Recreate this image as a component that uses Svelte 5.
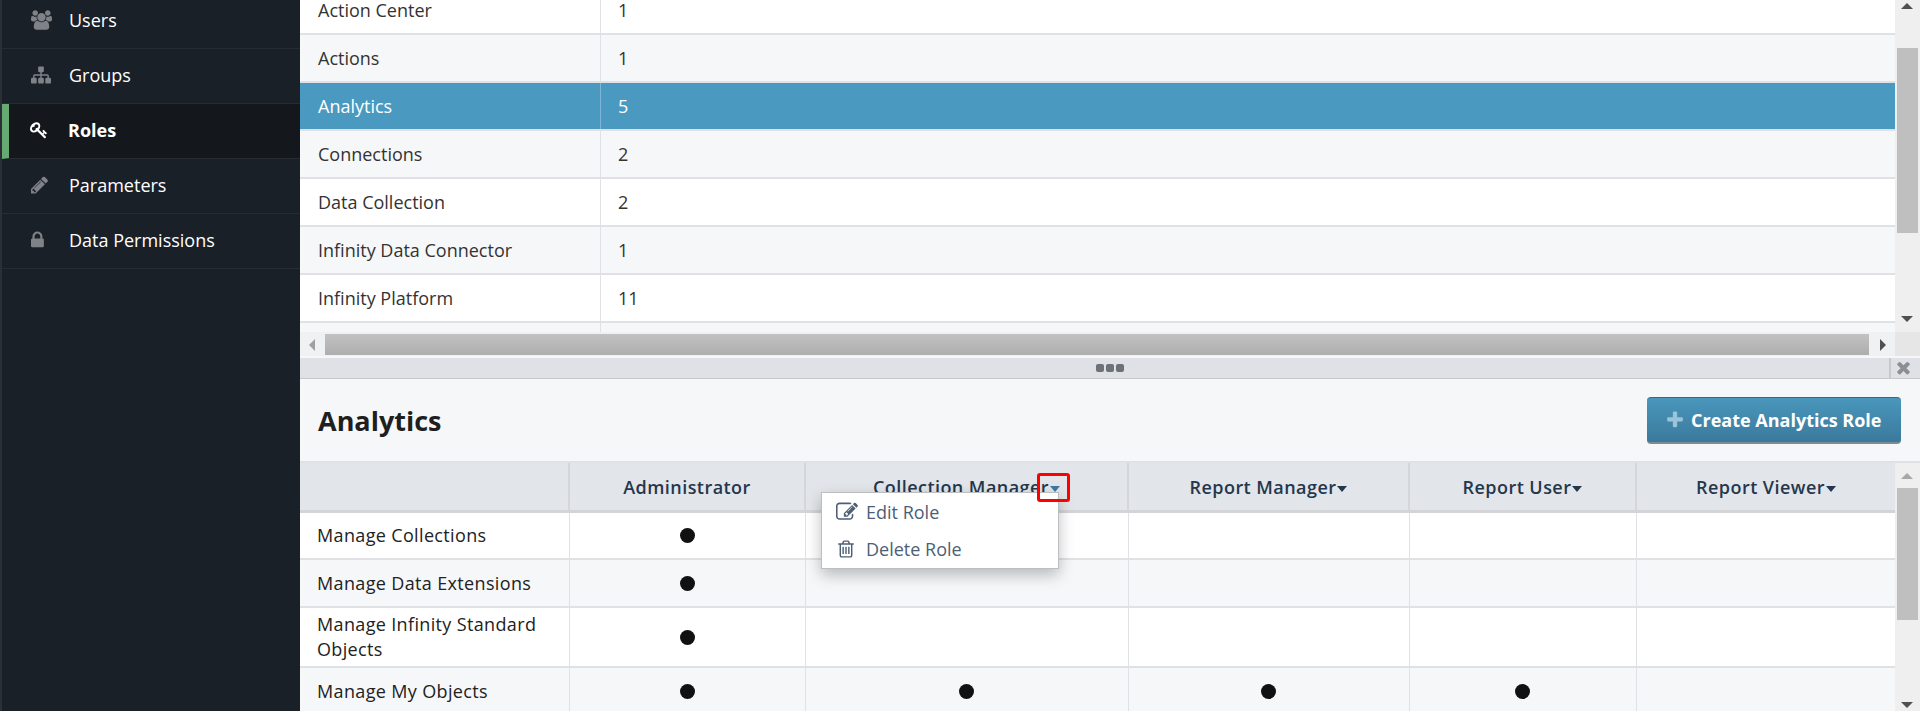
<script lang="ts">
    const icons: Record<string, string> = {
        users: "M593 896q-162 5-265 128h-134q-82 0-138-40.5t-56-118.5q0-353 124-353 6 0 43.5 21t97.5 42.5 119 21.5q67 0 133-23-5 37-5 66 0 139 81 256zm1071 637q0 120-73 189.5t-194 69.5h-874q-121 0-194-69.5t-73-189.5q0-53 3.5-103.5t14-109 26.5-108.5 43-97.5 62-81 85.5-53.5 111.5-20q10 0 43 21.5t73 48 107 48 135 21.5 135-21.5 107-48 73-48 43-21.5q61 0 111.5 20t85.5 53.5 62 81 43 97.5 26.5 108.5 14 109 3.5 103.5zm-1024-1277q0 106-75 181t-181 75-181-75-75-181 75-181 181-75 181 75 75 181zm704 384q0 159-112.5 271.5t-271.5 112.5-271.5-112.5-112.5-271.5 112.5-271.5 271.5-112.5 271.5 112.5 112.5 271.5zm576 225q0 78-56 118.5t-138 40.5h-134q-103-123-265-128 81-117 81-256 0-29-5-66 66 23 133 23 59 0 119-21.5t97.5-42.5 43.5-21q124 0 124 353zm-128-609q0 106-75 181t-181 75-181-75-75-181 75-181 181-75 181 75 75 181z",
        sitemap: "M1792 1248v320q0 40-28 68t-68 28h-320q-40 0-68-28t-28-68v-320q0-40 28-68t68-28h96v-192h-512v192h96q40 0 68 28t28 68v320q0 40-28 68t-68 28h-320q-40 0-68-28t-28-68v-320q0-40 28-68t68-28h96v-192h-512v192h96q40 0 68 28t28 68v320q0 40-28 68t-68 28h-320q-40 0-68-28t-28-68v-320q0-40 28-68t68-28h96v-192q0-52 38-90t90-38h512v-192h-96q-40 0-68-28t-28-68v-320q0-40 28-68t68-28h320q40 0 68 28t28 68v320q0 40-28 68t-68 28h-96v192h512q52 0 90 38t38 90v192h96q40 0 68 28t28 68z",
        key: "M832 512q0-80-56-136t-136-56-136 56-56 136q0 42 19 83-41-19-83-19-80 0-136 56t-56 136 56 136 136 56 136-56 56-136q0-42-19-83 41 19 83 19 80 0 136-56t56-136zm851 704q0 17-49 66t-66 49q-9 0-28.5-16t-36.5-33-38.5-40-24.5-26l-96 96 220 220q28 28 28 68 0 42-39 81t-81 39q-40 0-68-28l-671-671q-176 131-365 131-163 0-265.5-102.5t-102.5-265.5q0-160 95-313t248-248 313-95q163 0 265.5 102.5t102.5 265.5q0 189-131 365l355 355 96-96q-3-3-26-24.5t-40-38.5-33-36.5-16-28.5q0-17 49-66t66-49q13 0 23 10 6 6 46 44.5t82 79.5 86.5 86 73 78 28.5 41z",
        pencil: "M491 1536l91-91-235-235-91 91v107h128v128h107zm523-928q0-22-22-22-10 0-17 7l-542 542q-7 7-7 17 0 22 22 22 10 0 17-7l542-542q7-7 7-17zm-54-192l416 416-832 832h-416v-416zm683 96q0 53-37 90l-166 166-416-416 166-165q36-38 90-38 53 0 91 38l235 234q37 39 37 91z",
        lock: "M640 768h512v-192q0-106-75-181t-181-75-181 75-75 181v192zm832 96v576q0 40-28 68t-68 28h-960q-40 0-68-28t-28-68v-576q0-40 28-68t68-28h32v-192q0-184 132-316t316-132 316 132 132 316v192h32q40 0 68 28t28 68z",
        plus: "M1600 736v192q0 40-28 68t-68 28h-416v416q0 40-28 68t-68 28h-192q-40 0-68-28t-28-68v-416h-416q-40 0-68-28t-28-68v-192q0-40 28-68t68-28h416v-416q0-40 28-68t68-28h192q40 0 68 28t28 68v416h416q40 0 68 28t28 68z",
        times: "M1490 1322q0 40-28 68l-136 136q-28 28-68 28t-68-28l-294-294-294 294q-28 28-68 28t-68-28l-136-136q-28-28-28-68t28-68l294-294-294-294q-28-28-28-68t28-68l136-136q28-28 68-28t68 28l294 294 294-294q28-28 68-28t68 28l136 136q28 28 28 68t-28 68l-294 294 294 294q28 28 28 68z",
        edit: "M888 1184l116-116-152-152-116 116v56h96v96h56zm440-720q-16-16-33 1l-350 350q-17 17-1 33t33-1l350-350q17-17 1-33zm80 594v190q0 119-84.5 203.5t-203.5 84.5h-832q-119 0-203.5-84.5t-84.5-203.5v-832q0-119 84.5-203.5t203.5-84.5h832q63 0 117 25 15 7 18 23 3 17-9 29l-49 49q-14 14-32 8-23-6-45-6h-832q-66 0-113 47t-47 113v832q0 66 47 113t113 47h832q66 0 113-47t47-113v-126q0-13 9-22l64-64q15-15 35-7t20 29zm-96-738l288 288-672 672h-288v-288zm444 132l-92 92-288-288 92-92q28-28 68-28t68 28l152 152q28 28 28 68t-28 68z",
        trash: "M704 736v576q0 14-9 23t-23 9h-64q-14 0-23-9t-9-23v-576q0-14 9-23t23-9h64q14 0 23 9t9 23zm256 0v576q0 14-9 23t-23 9h-64q-14 0-23-9t-9-23v-576q0-14 9-23t23-9h64q14 0 23 9t9 23zm256 0v576q0 14-9 23t-23 9h-64q-14 0-23-9t-9-23v-576q0-14 9-23t23-9h64q14 0 23 9t9 23zm128 724v-948h-896v948q0 22 7 40.5t14.5 27 10.5 8.5h832q3 0 10.5-8.5t14.5-27 7-40.5zm-672-1076h448l-48-117q-7-9-17-11h-317q-10 2-17 11zm928 32v64q0 14-9 23t-23 9h-96v948q0 83-47 143.5t-113 60.5h-832q-66 0-113-58.5t-47-141.5v-952h-96q-14 0-23-9t-9-23v-64q0-14 9-23t23-9h309l70-167q15-37 54-63t79-26h320q40 0 79 26t54 63l70 167h309q14 0 23 9t9 23z",
    };

    // glyphs sit left-aligned in the reference, so some boxes start at the glyph's own edge
    const boxes: Record<string, string> = {
        users: "0 0 1920 1792",
        lock: "320 0 1792 1792",
        pencil: "128 0 1792 1792",
    };

    const nav = [
        { label: "Users", icon: "users" },
        { label: "Groups", icon: "sitemap" },
        { label: "Roles", icon: "key", active: true },
        { label: "Parameters", icon: "pencil" },
        { label: "Data Permissions", icon: "lock" },
    ];

    const categories = [
        ["Action Center", 1],
        ["Actions", 1],
        ["Analytics", 5],
        ["Connections", 2],
        ["Data Collection", 2],
        ["Infinity Data Connector", 1],
        ["Infinity Platform", 11],
        ["", ""],
    ];

    const roles = [
        { name: "Administrator" },
        { name: "Collection Manager", menu: true },
        { name: "Report Manager", menu: true },
        { name: "Report User", menu: true },
        { name: "Report Viewer", menu: true },
    ];

    const perms = [
        { name: "Manage Collections", on: [0] },
        { name: "Manage Data Extensions", on: [0] },
        { name: "Manage Infinity Standard Objects", on: [0] },
        { name: "Manage My Objects", on: [0, 1, 2, 3] },
    ];
</script>

{#snippet icon(name: string, cls: string)}
    <svg class={cls} viewBox={boxes[name] ?? "0 0 1792 1792"} aria-hidden="true"><path d={icons[name]} /></svg>
{/snippet}

<div class="app">
    <aside class="sidebar">
        <ul class="nav">
            {#each nav as item}
                <li class:active={item.active}>
                    {@render icon(item.icon, item.icon === "users" ? "nav-icon wide" : "nav-icon")}
                    <span>{item.label}</span>
                </li>
            {/each}
        </ul>
    </aside>

    <main class="main">
        <section class="top">
            <div class="top-body">
                <div class="top-list">
                    <div class="list">
                        {#each categories as [name, count], i}
                            <div class="row" class:alt={i % 2 === 1} class:selected={name === "Analytics"}>
                                <div class="cell-name">{name}</div>
                                <div class="cell-count">{count}</div>
                            </div>
                        {/each}
                    </div>
                </div>
                <div class="vbar">
                    <span class="arrow up"></span>
                    <div class="vthumb"></div>
                    <span class="arrow down"></span>
                </div>
            </div>
            <div class="hbar">
                <span class="arrow left"></span>
                <div class="hthumb"></div>
                <span class="arrow right"></span>
                <div class="corner"></div>
            </div>
        </section>

        <div class="splitter">
            <div class="handle"><i></i><i></i><i></i></div>
            <div class="close">{@render icon("times", "close-icon")}</div>
        </div>

        <section class="detail">
            <header class="detail-head">
                <h1>Analytics</h1>
                <button class="create">{@render icon("plus", "plus-icon")}Create Analytics Role</button>
            </header>

            <div class="matrix-wrap">
                <table class="matrix">
                    <colgroup>
                        <col style="width:269px" />
                        <col style="width:236px" />
                        <col style="width:323px" />
                        <col style="width:281px" />
                        <col style="width:227px" />
                        <col style="width:259px" />
                    </colgroup>
                    <thead>
                        <tr>
                            <th></th>
                            {#each roles as role}
                                <th class:open={role.name === "Collection Manager"}>
                                    {role.name}{#if role.menu}<span class="caret"></span>{/if}
                                </th>
                            {/each}
                        </tr>
                    </thead>
                    <tbody>
                        {#each perms as perm}
                            <tr>
                                <td class="perm">{perm.name}</td>
                                {#each roles as _, c}
                                    <td class="mark">
                                        {#if perm.on.includes(c)}<span class="dot"></span>{/if}
                                    </td>
                                {/each}
                            </tr>
                        {/each}
                    </tbody>
                </table>
                <div class="vbar low">
                    <span class="arrow up"></span>
                    <div class="vthumb"></div>
                    <span class="arrow down"></span>
                </div>

                <div class="menu">
                    <div class="menu-item"><span class="menu-ico">{@render icon("edit", "edit-icon")}</span>Edit Role</div>
                    <div class="menu-item"><span class="menu-ico">{@render icon("trash", "trash-icon")}</span>Delete Role</div>
                </div>
                <div class="callout"></div>
            </div>
        </section>
    </main>
</div>

<style>
    :global(body) {
        margin: 0;
        overflow: hidden;
    }

    .app {
        display: flex;
        width: 1920px;
        height: 711px;
        overflow: hidden;
        font-family: "Open Sans", sans-serif;
        background: #f6f7f9;
    }

    .sidebar {
        flex: 0 0 298px;
        border-left: 2px solid #2b3036;
        background: #1a2028;
        overflow: hidden;
    }

    .nav {
        margin: -6px 0 0;
        padding: 0;
        list-style: none;
    }

    .nav li {
        display: flex;
        align-items: center;
        box-sizing: border-box;
        height: 55px;
        padding: 0 0 3px 29px;
        border-bottom: 1px solid #262c33;
        color: #fff;
        font-size: 18px;
    }

    .nav li.active {
        background: #14181c;
        border-left: 7px solid #66a973;
        padding-left: 21px;
        font-weight: 700;
    }

    .nav-icon {
        flex: none;
        width: 20px;
        height: 20px;
        margin-right: 18px;
        fill: #7f8286;
    }

    .nav-icon.wide {
        width: 21px;
        margin-right: 17px;
    }

    .active .nav-icon {
        width: 18px;
        height: 18px;
        margin-right: 20px;
        fill: #fff;
    }

    .main {
        flex: 1;
        min-width: 0;
        display: flex;
        flex-direction: column;
    }

    .top {
        height: 356px;
        flex: none;
        display: flex;
        flex-direction: column;
        background: #fff;
    }

    .top-body {
        flex: 1;
        min-height: 0;
        display: flex;
    }

    .top-list {
        flex: 1;
        overflow: hidden;
    }

    .list {
        margin-top: -13px;
    }

    .row {
        display: flex;
        height: 48px;
        box-sizing: border-box;
        border-bottom: 2px solid #dfe1e4;
        color: #333;
        font-size: 18px;
        line-height: 46px;
        background: #fff;
    }

    .row.alt {
        background: #f6f7f9;
    }

    .row.selected {
        background: #4a99c0;
        color: #fff;
    }

    .cell-name {
        width: 301px;
        box-sizing: border-box;
        padding-left: 18px;
        border-right: 1px solid #dfe1e4;
    }

    .cell-count {
        padding-left: 17px;
    }

    .selected .cell-name {
        border-right-color: #7fb6d3;
    }

    .vbar {
        flex: 0 0 25px;
        width: 25px;
        background: #efefef;
        position: relative;
    }

    .vthumb {
        position: absolute;
        left: 2px;
        right: 2px;
        top: 48px;
        height: 185px;
        background: #bfbfbf;
    }

    .arrow {
        position: absolute;
        width: 0;
        height: 0;
        border: 6px solid transparent;
    }

    .arrow.up {
        top: 3px;
        left: 6px;
        border-top: 0;
        border-bottom: 6px solid #505050;
    }

    .arrow.down {
        bottom: 10px;
        left: 6px;
        border-bottom: 0;
        border-top: 6px solid #505050;
    }

    .hbar {
        position: relative;
        flex: none;
        height: 24px;
        background: #f0f1f2;
    }

    .hthumb {
        position: absolute;
        left: 25px;
        top: 2px;
        width: 1544px;
        height: 21px;
        background: linear-gradient(#c2c2c2, #aeaeae);
    }

    .arrow.left {
        top: 7px;
        left: 9px;
        border-left: 0;
        border-right: 6px solid #a0a0a0;
    }

    .arrow.right {
        top: 7px;
        left: 1580px;
        border-right: 0;
        border-left: 6px solid #505050;
    }

    .corner {
        position: absolute;
        right: 0;
        top: 0;
        width: 25px;
        height: 24px;
        background: #e6e6e6;
    }

    .splitter {
        flex: none;
        display: flex;
        height: 21px;
        margin-top: 2px;
        box-sizing: border-box;
        background: #dfe1e6;
        border-bottom: 1px solid #c6c8cb;
    }

    .handle {
        flex: 1;
        display: flex;
        justify-content: center;
        align-items: center;
        gap: 2px;
        padding-left: 30px;
    }

    .handle i {
        width: 8px;
        height: 8px;
        background: #6c7278;
        border-radius: 2px;
    }

    .close {
        flex: 0 0 31px;
        box-sizing: border-box;
        display: flex;
        align-items: center;
        justify-content: center;
        padding: 0 4px 2px 0;
        border-left: 2px solid #c6c8cb;
    }

    .close-icon {
        width: 19px;
        height: 19px;
        fill: #8b8f93;
    }

    .detail {
        flex: 1;
        min-height: 0;
        display: flex;
        flex-direction: column;
        background: #f6f7f9;
    }

    .detail-head {
        flex: none;
        height: 84px;
        box-sizing: border-box;
        display: flex;
        align-items: center;
        justify-content: space-between;
        padding: 1px 19px 0 18px;
        border-bottom: 2px solid #dfe1e4;
    }

    h1 {
        margin: 0;
        font-size: 27px;
        font-weight: 700;
        color: #1f1f1f;
    }

    .create {
        display: flex;
        align-items: center;
        width: 254px;
        height: 47px;
        padding: 0 0 0 18px;
        border: 0;
        border-radius: 4px;
        border-top: 1px solid #2f6c8c;
        border-bottom: 2px solid #7e8b93;
        background: linear-gradient(#4a96bc, #3a7a9c);
        color: #fff;
        font: 700 18px "Open Sans", sans-serif;
    }

    .plus-icon {
        width: 20px;
        height: 20px;
        margin-right: 6px;
        fill: #9ac4da;
    }

    .matrix-wrap {
        position: relative;
        flex: 1;
        min-height: 0;
        display: flex;
        overflow: hidden;
    }

    .matrix {
        flex: none;
        width: 1595px;
        height: fit-content;
        table-layout: fixed;
        border-collapse: collapse;
    }

    th {
        height: 48px;
        padding: 2px 0 0;
        box-sizing: border-box;
        background: #e2e5e9;
        border-right: 2px solid #d4d6d9;
        border-bottom: 3px solid #d2d4d7;
        color: #24374d;
        font-size: 18px;
        font-weight: 600;
        letter-spacing: 0.45px;
        text-align: center;
    }

    th:last-child {
        border-right: 0;
    }

    .caret {
        display: inline-block;
        width: 0;
        height: 0;
        margin-left: 1px;
        vertical-align: 2px;
        border-style: solid;
        border-color: transparent;
        border-width: 6px 5.5px 0;
        border-top-color: #24374d;
    }

    .open .caret {
        border-top-color: #3e7aa0;
    }

    td {
        padding: 0;
        border-right: 1px solid #dfe1e4;
        border-bottom: 2px solid #dfe1e4;
    }

    td:last-child {
        border-right: 0;
    }

    tbody tr {
        background: #fff;
    }

    tbody tr:nth-child(even) {
        background: #f6f7f9;
    }

    tbody tr:nth-child(1),
    tbody tr:nth-child(2),
    tbody tr:nth-child(4) {
        height: 48px;
    }

    .perm {
        padding: 4px 18px 4px 17px;
        color: #222;
        font-size: 18px;
        letter-spacing: 0.35px;
        line-height: 25px;
    }

    .mark {
        text-align: center;
        line-height: 0;
    }

    .dot {
        display: inline-block;
        width: 15px;
        height: 15px;
        border-radius: 50%;
        background: #111;
    }

    .vbar.low {
        flex: 0 0 25px;
    }

    .low .arrow.up {
        top: 10px;
        border-bottom-color: #a8a8a8;
    }

    .low .arrow.down {
        bottom: 3px;
    }

    .low .vthumb {
        top: 25px;
        height: 132px;
    }

    .menu {
        position: absolute;
        left: 521px;
        top: 29px;
        width: 238px;
        box-sizing: border-box;
        padding-bottom: 1px;
        background: #fff;
        border: 1px solid #bcbec1;
        box-shadow: 0 6px 14px rgba(0, 0, 0, 0.25);
        color: #4c5f75;
        font-size: 18px;
    }

    .menu-item {
        display: flex;
        align-items: center;
        height: 37px;
        padding-left: 14px;
    }

    .menu-ico {
        flex: none;
        display: flex;
        width: 30px;
        fill: #4c5f75;
    }

    .edit-icon {
        width: 22px;
        height: 22px;
    }

    .trash-icon {
        width: 20px;
        height: 20px;
    }

    .callout {
        position: absolute;
        left: 737px;
        top: 10px;
        width: 33px;
        height: 29px;
        box-sizing: border-box;
        border: 3px solid #f00;
        border-radius: 3px;
    }
</style>
